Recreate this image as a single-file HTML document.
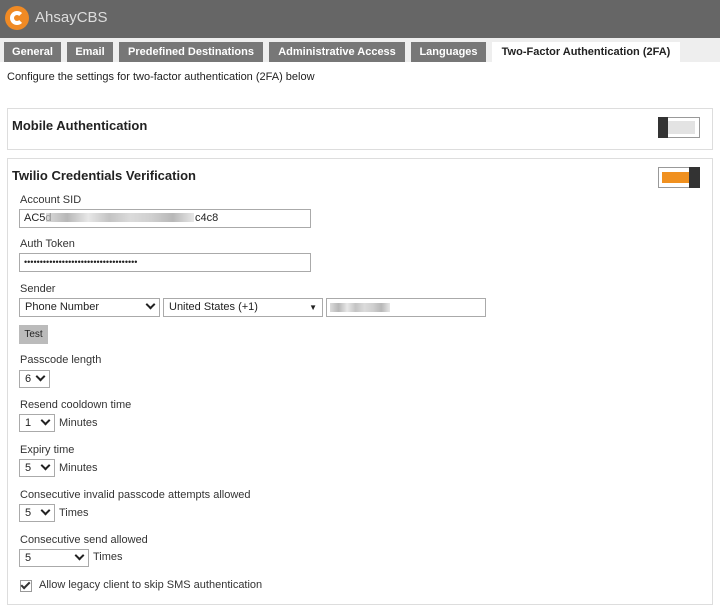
<!DOCTYPE html>
<html><head><style>
*{box-sizing:border-box;margin:0;padding:0}
body{width:720px;height:615px;background:#fff;font-family:"Liberation Sans",Arial,sans-serif;font-size:11px;color:#222;position:relative;overflow:hidden}
.a{position:absolute}
.hdr{left:0;top:0;width:720px;height:38px;background:#666}
.tabbar{left:0;top:38px;width:720px;height:24px;background:#eee}
.tab{position:absolute;top:4px;height:20px;background:#777;color:#fff;font-weight:bold;font-size:11px;line-height:20px;text-align:center}
.panel{border:1px solid #ddd;background:#fff}
.t{font-weight:bold;font-size:13px;color:#222}
.lbl{font-size:11px;color:#333}
.in{border:1px solid #aaa;background:#fff;height:19px;font-size:11px;line-height:17px;padding-left:4px}
.sel{border:1px solid #aaa;background:#fff;height:19px;font-size:11px;line-height:17px;padding-left:5px}
.chev{position:absolute;right:5px;top:4px;width:7px;height:7px;border-right:2px solid #222;border-bottom:2px solid #222;transform:rotate(45deg);top:2px}
.blur{position:absolute;height:9px;background:linear-gradient(90deg,#ccc,#999,#ddd,#aaa,#ccc,#bbb,#999,#ddd);opacity:.7}
</style></head><body>
<div class="a hdr"></div>
<div class="a" style="left:5px;top:6px;width:24px;height:24px;border-radius:50%;background:#f08a24"></div>
<div class="a" style="left:10px;top:11px;width:14px;height:14px;border-radius:50%;border:4px solid #fff;border-right-color:transparent"></div>
<div class="a" style="left:35px;top:9px;font-size:15px;color:#ddd">AhsayCBS</div>
<div class="a tabbar"></div>
<div class="tab" style="left:4px;width:57px;top:42px">General</div>
<div class="tab" style="left:67px;width:46px;top:42px">Email</div>
<div class="tab" style="left:119px;width:144px;top:42px">Predefined Destinations</div>
<div class="tab" style="left:269px;width:136px;top:42px">Administrative Access</div>
<div class="tab" style="left:411px;width:75px;top:42px">Languages</div>
<div class="tab" style="left:492px;width:188px;top:42px;background:#fff;color:#222">Two-Factor Authentication (2FA)</div>
<div class="a" style="left:7px;top:71px;font-size:11px">Configure the settings for two-factor authentication (2FA) below</div>

<div class="a panel" style="left:7px;top:108px;width:706px;height:42px"></div>
<div class="a t" style="left:12px;top:118px">Mobile Authentication</div>
<div class="a" style="left:658px;top:117px;width:42px;height:21px;border:1px solid #999;background:#fff"></div>
<div class="a" style="top:121px;width:27px;height:13px;background:#e3e3e3;left:668px"></div>
<div class="a" style="left:658px;top:117px;width:10px;height:21px;background:#333"></div>

<div class="a panel" style="left:7px;top:158px;width:706px;height:447px"></div>
<div class="a t" style="left:12px;top:168px">Twilio Credentials Verification</div>
<div class="a" style="left:658px;top:167px;width:42px;height:21px;border:1px solid #999;background:#fff"></div>
<div class="a" style="left:662px;top:172px;width:28px;height:11px;background:#f0901f"></div>
<div class="a" style="left:689px;top:167px;width:11px;height:21px;background:#333"></div>

<div class="a lbl" style="left:20px;top:194px">Account SID</div>
<div class="a in" style="left:19px;top:209px;width:292px">AC5d</div>
<div class="blur" style="left:46px;top:213px;width:148px"></div>
<div class="a" style="left:195px;top:212px;font-size:11px">c4c8</div>
<div class="a lbl" style="left:20px;top:238px">Auth Token</div>
<div class="a in" style="left:19px;top:253px;width:292px;font-size:9px;letter-spacing:0px">••••••••••••••••••••••••••••••••••••</div>
<div class="a lbl" style="left:20px;top:283px">Sender</div>
<div class="a sel" style="left:19px;top:298px;width:141px">Phone Number<span class="chev"></span></div>
<div class="a sel" style="left:163px;top:298px;width:160px">United States (+1)<span style="position:absolute;right:5px;top:0;font-size:8px">▼</span></div>
<div class="a in" style="left:326px;top:298px;width:160px"></div>
<div class="blur" style="left:330px;top:303px;width:60px"></div>
<div class="a" style="left:19px;top:325px;width:29px;height:19px;background:#bbb;font-size:10px;line-height:19px;text-align:center">Test</div>

<div class="a lbl" style="left:20px;top:354px">Passcode length</div>
<div class="a sel" style="left:19px;top:370px;width:31px;height:18px">6<span class="chev"></span></div>
<div class="a lbl" style="left:20px;top:399px">Resend cooldown time</div>
<div class="a sel" style="left:19px;top:414px;width:36px;height:18px">1<span class="chev"></span></div>
<div class="a lbl" style="left:59px;top:417px">Minutes</div>
<div class="a lbl" style="left:20px;top:444px">Expiry time</div>
<div class="a sel" style="left:19px;top:459px;width:36px;height:18px">5<span class="chev"></span></div>
<div class="a lbl" style="left:59px;top:462px">Minutes</div>
<div class="a lbl" style="left:20px;top:489px">Consecutive invalid passcode attempts allowed</div>
<div class="a sel" style="left:19px;top:504px;width:36px;height:18px">5<span class="chev"></span></div>
<div class="a lbl" style="left:59px;top:507px">Times</div>
<div class="a lbl" style="left:20px;top:534px">Consecutive send allowed</div>
<div class="a sel" style="left:19px;top:549px;width:70px;height:18px">5<span class="chev"></span></div>
<div class="a lbl" style="left:93px;top:551px">Times</div>
<div class="a" style="left:20px;top:580px;width:12px;height:12px;border:1px solid #999;background:#fff"></div>
<div class="a" style="left:23px;top:580px;width:5px;height:9px;border-right:2px solid #333;border-bottom:2px solid #333;transform:rotate(45deg)"></div>
<div class="a lbl" style="left:39px;top:579px">Allow legacy client to skip SMS authentication</div>
</body></html>
